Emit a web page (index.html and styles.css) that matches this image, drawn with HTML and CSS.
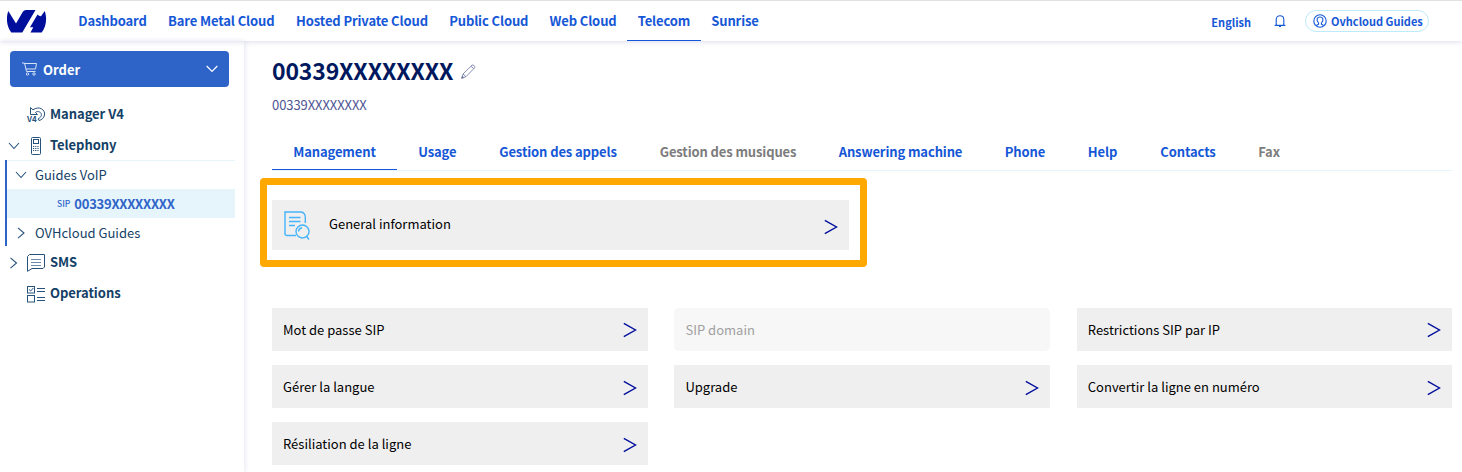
FILE: index.html
```
<!DOCTYPE html>
<html lang="en">
<head>
<meta charset="utf-8">
<title>Telecom</title>
<link rel="stylesheet" href="styles.css">
</head>
<body>
<header class="topbar">
  <svg class="logo" width="40" height="24" viewBox="0 0 40 24" fill="#000e9c"><path d="M1.300 2 L9 14.500 L16 2.500 Q17 1 19 1 H28.500 L15.300 23.500 H4.300 C-.3 17.500 -1.300 9 1.300 2Z"/><path d="M37.700 2 C40.300 9 39.300 17.500 34.700 23.500 H23.500 L26.300 18.300 H23 L30.500 5.500 Q32.200 7.500 34 7.300 Z"/></svg>
  <nav class="nav">
    <a>Dashboard</a><a>Bare Metal Cloud</a><a>Hosted Private Cloud</a><a>Public Cloud</a><a>Web Cloud</a><a class="active">Telecom</a><a>Sunrise</a>
  </nav>
  <div class="user">
    <span class="lang">English</span>
    <svg class="bell" width="12" height="12" viewBox="0 0 12 12" fill="none" stroke="#1557d6" stroke-width="1.1"><path d="M.7 10.400 H11.300 M2.200 10 V4.500 C2.200 -.6 9.800 -.6 9.800 4.500 V10 M5 11.500 H7"/></svg>
    <span class="account">
      <svg width="14" height="14" viewBox="0 0 14 14" fill="none" stroke="#1557d6" stroke-width="1.100"><circle cx="7" cy="7" r="6.200"/><path d="M3.300 11.500 L5.600 10.200 V9 C2.500 5.500 4.500 3 7 3 C9.500 3 11.500 5.500 8.400 9 V10.200 L10.700 11.500"/></svg>
      <span>Ovhcloud Guides</span>
    </span>
  </div>
</header>
<div class="layout">
  <aside class="side">
    <div class="order">
      <svg width="16" height="14" viewBox="0 0 16 14" fill="none" stroke="#d5e1f5" stroke-width="1"><path d="M0 1 H2.500 L4.500 9.500 H13.500 M2.700 1.500 H14.500 L13.500 7 H4"/><circle cx="5.500" cy="12" r="1.200"/><circle cx="12" cy="12" r="1.200"/></svg>
      <span class="order-label">Order</span>
      <svg width="12" height="8" viewBox="0 0 12 8" fill="none" stroke="#fff" stroke-width="1.200"><path d="M.7 1 L6 6.500 L11.300 1"/></svg>
    </div>
    <div class="tree">
      <div class="row">
        <span class="chev"></span>
        <svg class="ico" width="19" height="17" viewBox="0 0 19 17" fill="none" stroke="#27527c" stroke-width="1"><path d="M3.500 8.500 V1.500 L6 3.800 C12 -.5 18.500 3.500 17.500 9 C17 12 14.500 14 12 14.500 L11 13 C15 11 15.500 7.500 12.500 6 C11 5.200 9.500 5.500 8.500 6.500 L10.500 8.500 H3.500"/><text x="0" y="16" class="v4">V4</text></svg>
        <span class="label">Manager V4</span>
      </div>
      <div class="row">
        <svg class="chev" width="12" height="8" viewBox="0 0 12 8" fill="none" stroke="#27527c" stroke-width="1.100"><path d="M1 1 L6 6.500 L11 1"/></svg>
        <svg class="ico" width="19" height="18" viewBox="0 0 19 18" fill="none" stroke="#27527c" stroke-width="1"><rect x="4.500" y=".5" width="9" height="17" rx="1"/><rect x="6.500" y="2.500" width="5" height="4"/><path d="M6 9.500 H12 M6 11.500 H12 M6 13.500 H12" stroke-dasharray="1.200 1"/></svg>
        <span class="label">Telephony</span>
      </div>
      <div class="sub">
        <div class="subrow first">
          <svg class="chev2" width="12" height="8" viewBox="0 0 12 8" fill="none" stroke="#27527c" stroke-width="1.100"><path d="M1 1 L6 6.500 L11 1"/></svg>
          <span>Guides VoIP</span>
        </div>
        <div class="line"><span class="sip">SIP</span><span class="num">00339XXXXXXXX</span></div>
        <div class="subrow last">
          <svg class="chev2" width="12" height="12" viewBox="0 0 12 12" fill="none" stroke="#27527c" stroke-width="1.100"><path d="M3 .8 L9 6 L3 11.200"/></svg>
          <span>OVHcloud Guides</span>
        </div>
      </div>
      <div class="row">
        <svg class="chev" width="12" height="12" viewBox="0 0 12 12" fill="none" stroke="#27527c" stroke-width="1.100"><path d="M2.500 .8 L8.500 6 L2.500 11.200"/></svg>
        <svg class="ico" width="19" height="18" viewBox="0 0 19 18" fill="none" stroke="#27527c" stroke-width="1"><path d="M.5 17.300 V2.500 L2.500 .5 H17.500 V13 L16 14.500 H5Z"/><path d="M4 5.500 H14 M4 8.500 H14 M4 11.500 H14" stroke="#6d8bac"/></svg>
        <span class="label">SMS</span>
      </div>
      <div class="row">
        <span class="chev"></span>
        <svg class="ico ops" width="19" height="17" viewBox="0 0 19 17" fill="none" stroke="#27527c" stroke-width="1"><rect x=".5" y=".5" width="7" height="6.500"/><rect x=".5" y="9.500" width="7" height="6.500"/><path d="M2 3.500 L3.700 5 L6.300 2 M10 2.500 H18 M10 5.500 H18 M10 11.500 H18 M10 14.500 H18"/></svg>
        <span class="label">Operations</span>
      </div>
    </div>
  </aside>
  <main class="main">
    <div class="title"><h1>00339XXXXXXXX</h1>
      <svg width="15" height="15" viewBox="0 0 15 15" fill="none" stroke="#7d83ae" stroke-width=".9"><path d="M.8 14.200 L2 10 L11 1.200 C12 .2 14.700 2.500 13.600 3.800 L5 12.700Z M2 10 L5 12.700 M10 2.200 L12.800 4.700"/><path d="M.7 14.300 L1.400 12.200 L2.800 13.500Z" fill="#33407f"/></svg>
    </div>
    <p class="desc">00339XXXXXXXX</p>
    <nav class="tabs">
      <a class="active">Management</a><a>Usage</a><a>Gestion des appels</a><a class="off">Gestion des musiques</a><a>Answering machine</a><a>Phone</a><a>Help</a><a>Contacts</a><a class="off">Fax</a>
    </nav>
    <section class="highlight">
      <div class="general">
        <svg width="27" height="29" viewBox="0 0 27 29" fill="none" stroke="#45b4fb" stroke-width="1.400"><path d="M12 24.500 H3 Q1 24.500 1 22.500 V1 H17 Q21 1.500 21.300 6 V12 M1 20.500 V22.500 M5 6.500 H16.500 M5 10.500 H16.500 M5 14.500 H11"/><circle cx="18.500" cy="20.500" r="6.500"/><path d="M14.500 20.500 Q14.800 17.500 18 16.800 M22.700 25.500 L25 28.500"/></svg>
        <span>General information</span>
        <svg class="arrow" width="14" height="16" viewBox="0 0 14 16"><path d="M.8 1.300 L12.500 8 L.8 14.700"/></svg>
      </div>
    </section>
    <section class="tiles">
      <div class="tile"><span>Mot de passe SIP</span><svg class="arrow" width="14" height="16" viewBox="0 0 14 16"><path d="M.8 1.300 L12.500 8 L.8 14.700"/></svg></div>
      <div class="tile disabled"><span>SIP domain</span></div>
      <div class="tile"><span>Restrictions SIP par IP</span><svg class="arrow" width="14" height="16" viewBox="0 0 14 16"><path d="M.8 1.300 L12.500 8 L.8 14.700"/></svg></div>
      <div class="tile low"><span>Gérer la langue</span><svg class="arrow" width="14" height="16" viewBox="0 0 14 16"><path d="M.8 1.300 L12.500 8 L.8 14.700"/></svg></div>
      <div class="tile low"><span>Upgrade</span><svg class="arrow" width="14" height="16" viewBox="0 0 14 16"><path d="M.8 1.300 L12.500 8 L.8 14.700"/></svg></div>
      <div class="tile low"><span>Convertir la ligne en numéro</span><svg class="arrow" width="14" height="16" viewBox="0 0 14 16"><path d="M.8 1.300 L12.500 8 L.8 14.700"/></svg></div>
      <div class="tile low"><span>Résiliation de la ligne</span><svg class="arrow" width="14" height="16" viewBox="0 0 14 16"><path d="M.8 1.300 L12.500 8 L.8 14.700"/></svg></div>
    </section>
  </main>
</div>
</body>
</html>
```
FILE: styles.css
```
* { box-sizing: border-box; }
body {
  margin: 0; height: 472px; overflow: hidden; background: #fff; color: #000;
  font: 13px/20px "Noto Sans CJK SC", "Noto Sans", sans-serif;
  display: flex; flex-direction: column;
}
svg { display: block; flex: none; }
span, a { white-space: nowrap; }
.topbar { height: 41px; flex: none; border-top: 1px solid #e2e2e2; display: flex; padding: 0 33px 0 7px; box-shadow: 0 1px 5px rgba(0,0,140,.14); z-index: 1; }
.logo { margin-top: 8px; }
.nav { margin-left: 21px; display: grid; grid-template-columns: 89px 128.5px 153px 100.5px 88px 74px 68px; color: #1557d6; font-weight: 700; letter-spacing: -.12px; }
.nav a { text-align: center; padding-top: 10px; }
.nav .active { border-bottom: 1px solid #1557d6; }
.user { margin-left: auto; display: flex; align-items: center; color: #1557d6; font-weight: 700; font-size: 11px; }
.lang { padding-top: 1px; }
.bell { margin-left: 23px; }
.account { margin-left: 19px; width: 124px; height: 22px; border: 1px solid #bdebfb; border-radius: 11px; display: flex; align-items: center; gap: 4px; padding-left: 7px; }
.layout { flex: 1; display: flex; min-height: 0; }
.side { width: 244px; flex: none; padding: 10px 9px 0 5px; box-shadow: 1px 0 5px rgba(0,0,140,.1); color: #143f66; }
.order { margin-left: 5px; width: 219px; height: 36px; border-radius: 4px; background: #2e64c8; color: #fff; display: flex; align-items: center; padding: 0 11px 0 12px; }
.order-label { margin-left: 5px; font-weight: 700; flex: 1; padding-top: 1px; }
.tree { padding-top: 12px; }
.row { height: 31px; display: flex; align-items: center; font-weight: 700; }
.label { padding-bottom: 2px; letter-spacing: -.04px; }
.chev { width: 12px; margin-left: 3px; margin-right: 7px; }
.ico { margin-right: 4px; }
.ops { margin-top: 1px; }
.v4 { font: 700 8px "Noto Sans CJK SC", sans-serif; fill: #27527c; stroke: none; }
.sub { width: 230px; border-left: 2px solid #2e64c8; height: 86px; margin: -1px 0 1px; }
.subrow { height: 28px; display: flex; align-items: center; padding-left: 8px; }
.subrow.first { height: 29px; border-top: 1px solid #e6f5fc; }
.subrow.last { height: 30px; }
.chev2 { margin-right: 8px; }
.line { height: 29px; background: #e6f5fc; color: #2e64c8; display: flex; align-items: center; padding-left: 50px; font-weight: 700; }
.sip { font-size: 8.500px; font-weight: 500; margin-right: 4px; padding-bottom: 2px; }
.num { letter-spacing: -.25px; }
.main { flex: 1; padding: 14px 10px 0 28px; }
.title { display: flex; align-items: center; height: 30px; gap: 8px; color: #00185e; }
.title svg { margin-top: 2px; }
h1 { margin: 0; font-size: 23px; line-height: 30px; font-weight: 700; letter-spacing: -.15px; }
.desc { margin: 10px 0 0; color: #4d5592; letter-spacing: -.08px; }
.tabs { margin-top: 20px; height: 36px; border-bottom: 1px solid #e6f5fc; display: grid; grid-template-columns: 125px 80.500px 161px 179px 166px 83px 72px 99px 63px; color: #1557d6; font-weight: 700; letter-spacing: -.12px; }
.tabs a { text-align: center; padding-top: 7px; height: 35px; }
.tabs .active { border-bottom: 1px solid #1557d6; }
.tabs .off { color: #7c7c7c; }
.highlight { margin: 7px 0 0 -12px; width: 607px; height: 89px; border: 7px solid #ffa800; border-radius: 4px; padding: 15px 11px 0 5px; }
.general { height: 50px; background: #efefef; display: flex; align-items: center; padding: 0 11px 0 12px; }
.general span { margin-left: 18px; flex: 1; margin-top: -3px; }
.arrow { fill: none; stroke: #000e9c; stroke-width: 1.400; }
.general .arrow { margin-top: 4px; }
.tiles { margin-top: 41px; display: grid; grid-template-columns: 376px 376px 375px; column-gap: 26.400px; row-gap: 14px; }
.tile { height: 43px; background: #efefef; display: flex; align-items: center; justify-content: space-between; padding: 0 11px; }
.low .arrow { margin-top: 3px; }
.disabled { background: #f7f7f7; color: #a0a0a0; border-radius: 5px; }
```
